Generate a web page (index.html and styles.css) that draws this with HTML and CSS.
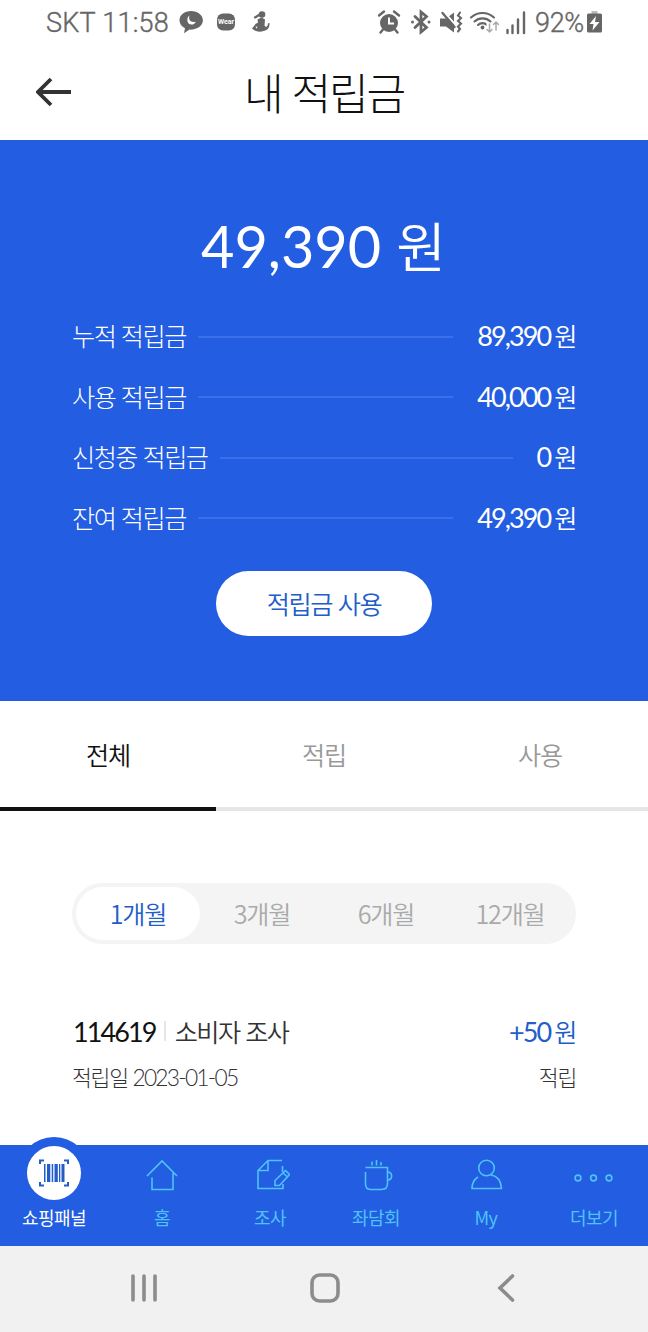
FILE: index.html
```html
<!DOCTYPE html>
<html lang="ko">
<head>
    <meta charset="UTF-8">
    <meta name="viewport" content="width=device-width, initial-scale=1.0">
    <link rel="stylesheet" href="styles.css">
    <title>내 적립금</title>
</head>
<body>
    <div id="status">
        <span class="carrier">SKT 11:58</span>
        <svg class="statusLeft" width="92" height="26" viewBox="0 0 92 26">
            <path d="M13 2C6.500 2 1.500 6 1.500 11.300c0 3.500 2.200 6.300 5.500 7.900l-1 5 5.500-3.600c7.500.4 13.400-3.800 13.400-9.300C24.900 6 19.500 2 13 2z"/>
            <path class="cut" d="M11.500 6.500c-1.500 4.300 1.300 7.500 6.300 6.200-2.200 4.600-8.500 3.300-8.500-1.500 0-2.200.8-3.700 2.200-4.700z"/>
            <rect x="39" y="4.500" width="18" height="17" rx="6"/>
            <text class="wear" x="48" y="15" text-anchor="middle">Wear</text>
            <circle cx="84" cy="5.500" r="3.300"/>
            <path d="M79.500 10.500l4-2 3.500 2-.5 6 1.500 1.500c1.500-.5 2-2.300 2-3.700l1.500-.3c.3 5-2.500 7.500-6 8-3.500 1.500-8 1-11.500-2.500l3.500-4.500 2.500-1.500z"/>
            <path class="cut" d="M77.500 17.500l2 .2-.8 2z"/>
            <path class="stroke thin" d="M77 8.500l4-2.500"/>
        </svg>
        <svg class="statusRight" width="150" height="26" viewBox="0 0 150 26">
            <!-- alarm -->
            <circle cx="12" cy="14" r="9"/>
            <path class="stroke" d="M2 6.500l5-4M22 6.500l-5-4M6 20.500l-2.500 3M18 20.500l2.500 3"/>
            <path class="cut-line" d="M12 8.500v6h5"/>
            <!-- bluetooth -->
            <path class="stroke heavy" d="M38 7.500l11.500 11-5.500 4.500V3l5.500 4.500-11.500 11"/>
            <circle cx="35.500" cy="13" r="1.500"/><circle cx="52" cy="13" r="1.500"/>
            <!-- sound off -->
            <path d="M63 9.500h6l8-6v20l-8-6h-6z"/>
            <path class="cut-line" d="M66 2l14 15.500"/>
            <path class="stroke" d="M65.500 4L77.500 18"/>
            <path class="stroke thin" d="M83 3.500l-2 3 3 2.500-3 3 3 2.500-3 3 2 2.500-2 2.500"/>
            <!-- wifi -->
            <path class="stroke thin" d="M94 8.500c6.500-6 16.500-6 23 0M97.500 12.500c4.500-4.200 11.500-4.200 16 0M101 16c2.500-2.500 6.500-2.500 9 0"/>
            <circle cx="105.500" cy="18.500" r="1.900"/>
            <path class="gap" d="M109.500 14h12v11h-12z"/>
            <path class="stroke faint" d="M112.500 15v8M110 20.500l2.500 2.500 2.500-2.500M119 21v-8M116.500 15.500l2.500-2.500 2.500 2.500"/>
            <!-- signal -->
            <path class="stroke" d="M130.500 21v3M135.500 16.500v7.500M141 10.500v13.500M147 3.500v20.500"/>
        </svg>
        <span class="battery">92%</span>
        <svg class="cell" width="15" height="22" viewBox="0 0 15 22">
            <path class="faintFill" d="M4.500 0h6v3h-6z"/>
            <rect x="0" y="2.500" width="15" height="19" rx="1.500"/>
            <path class="cut" d="M9 5L2.500 13h4l-1 6.500L12.500 11H8z"/>
        </svg>
    </div>

    <header>
        <svg class="back" width="36" height="30" viewBox="0 0 36 30"><path d="M35 15H2M15 2L2 15l13 13"/></svg>
        <h1>내 적립금</h1>
    </header>

    <div id="summary">
        <p class="total"><span class="num">49,390</span> 원</p>
        <ul>
            <li><span class="label">누적 적립금</span><i></i><span class="amount"><b>89,390</b> 원</span></li>
            <li><span class="label">사용 적립금</span><i></i><span class="amount"><b>40,000</b> 원</span></li>
            <li><span class="label">신청중 적립금</span><i></i><span class="amount"><b>0</b> 원</span></li>
            <li><span class="label">잔여 적립금</span><i></i><span class="amount"><b>49,390</b> 원</span></li>
        </ul>
        <button class="use">적립금 사용</button>
    </div>

    <div id="tabs">
        <a class="on">전체</a>
        <a>적립</a>
        <a>사용</a>
    </div>

    <div id="period">
        <a class="on">1개월</a>
        <a>3개월</a>
        <a>6개월</a>
        <a>12개월</a>
    </div>

    <div id="history">
        <div class="line">
            <p class="name"><b>114619</b><i></i>소비자 조사</p>
            <p class="plus"><b>+50</b> 원</p>
        </div>
        <div class="line small">
            <p>적립일 <span class="date">2023-01-05</span></p>
            <p>적립</p>
        </div>
    </div>

    <nav>
        <a class="panel">
            <span class="round">
                <svg width="30" height="28" viewBox="0 0 30 28">
                    <path class="corner" d="M1 5V1.500h4M25 1.500h4V5M1 23v3.500h4M25 26.500h4V23"/>
                    <path d="M5 5h1.500v18H5zM8 5h3.300v18H8zM12.700 5h1.500v18h-1.500zM15.500 5h3.300v18h-3.300zM20 5h1.300v18H20zM22.500 5h3v18h-3z"/>
                </svg>
            </span>
            <span>쇼핑패널</span>
        </a>
        <a>
            <svg width="34" height="34" viewBox="0 0 34 34"><path d="M2 18L17 3l15 15M7 19.500V31.500h21V15"/></svg>
            <span>홈</span>
        </a>
        <a>
            <svg width="40" height="34" viewBox="0 0 40 34"><path d="M32 2.500H18L8 12.500v18h25V26M18 2.500v10H8M32.500 8v6M25 27.500V22.500L35.500 12.500l4 4L29.500 27.500zM33 15l4 3.500"/></svg>
            <span>조사</span>
        </a>
        <a class="talk">
            <svg width="34" height="34" viewBox="0 0 34 34"><path d="M6.500 9.500h22v16c0 4-2 6-6 6h-11c-3.500 0-5-2-5-6V14M28.500 14c5.500-.5 5.500 8.500 0 8M13 3.500v4M17.500 2v5.500M22 4v3.500"/></svg>
            <span>좌담회</span>
        </a>
        <a>
            <svg width="34" height="34" viewBox="0 0 34 34"><circle cx="17.500" cy="10" r="7.800"/><path d="M9 19c-4 2.500-6 6-6 11.500h29.500C32 23 28 18 22 17"/></svg>
            <span>My</span>
        </a>
        <a>
            <svg width="40" height="34" viewBox="0 0 40 34"><circle cx="4" cy="20" r="2.900"/><circle cx="19.500" cy="20" r="2.900"/><circle cx="35" cy="20" r="2.900"/></svg>
            <span>더보기</span>
        </a>
    </nav>

    <div id="system">
        <svg width="30" height="30" viewBox="0 0 30 30"><path d="M4 3v24M15 3v24M26 3v24"/></svg>
        <svg width="30" height="30" viewBox="0 0 30 30"><rect x="2" y="2" width="26" height="26" rx="7.500"/></svg>
        <svg width="30" height="30" viewBox="0 0 30 30"><path d="M21.500 3l-12.500 12 12.500 12"/></svg>
    </div>
</body>
</html>
```

FILE: styles.css
```css
*{ box-sizing: border-box; margin: 0; padding: 0; }
body{ width: 648px; height: 1332px; overflow: hidden; background-color: #fff; font-family: "Noto Sans CJK KR", sans-serif; font-weight: 350; display: flex; flex-direction: column; }
svg{ flex: none; display: block; }
i{ display: block; }

#status{ height: 46px; display: flex; align-items: center; padding: 0 46px 2px 46px; font: 27px/1 Roboto, sans-serif; color: #666; fill: #666; }
.carrier{ width: 124px; padding-top: 2px; font-weight: 300; white-space: nowrap; letter-spacing: 0.25px; -webkit-text-stroke: 0.4px #666; }
.statusLeft{ margin-left: 8px; }
.statusRight{ margin-left: auto; }
.battery{ font-weight: 300; margin-left: 8px; padding-top: 2px; width: 51px; -webkit-text-stroke: 0.4px #666; letter-spacing: -0.3px; }
.cell{ margin-left: 1px; }
.cut{ fill: #fff; }
.gap{ fill: #fff; }
.cut-line{ fill: none; stroke: #fff; stroke-width: 2; }
.wear{ font: bold 7px Roboto, sans-serif; fill: #fff; }
.stroke{ fill: none; stroke: #666; stroke-width: 2.4; stroke-linecap: round; }
.thin{ stroke-width: 2.1; }
.heavy{ stroke-width: 2.8; }
.faint{ stroke: #aaa; stroke-width: 1.5; }
.faintFill{ fill: #bbb; }

header{ height: 94px; position: relative; display: flex; justify-content: center; align-items: center; padding-bottom: 5px; }
.back{ position: absolute; left: 36px; top: 31px; fill: none; stroke: #333; stroke-width: 3.8; }
h1{ font-size: 43.2px; line-height: 60px; font-weight: 300; letter-spacing: -0.05em; color: #111; }

#summary{ height: 561px; background-color: #225de2; color: #fff; padding: 65px 72px 0; display: flex; flex-direction: column; align-items: center; }
.total{ font-size: 54px; line-height: 80px; white-space: nowrap; margin-left: -1px; }
.total .num{ font-family: Lato, sans-serif; font-weight: 400; font-size: 57.6px; }
ul{ list-style: none; width: 504px; margin-top: 19px; }
li{ display: flex; align-items: center; height: 60.5px; font-size: 25.2px; letter-spacing: -0.06em; }
li i{ flex: 1; height: 2px; margin: 3px 24px 0 12px; background-color: #3a70e8; }
.label{ font-weight: 300; }
.amount{ word-spacing: -1.5px; }
.amount b{ font: 400 27px/1 Lato, sans-serif; letter-spacing: -0.07em; }
.use{ width: 216px; height: 65px; margin-top: 24px; padding-bottom: 2px; border: 0; border-radius: 33px; background-color: #fff; color: #225dc9; font: 350 25.2px "Noto Sans CJK KR", sans-serif; letter-spacing: -0.055em; }

#tabs{ display: flex; height: 110px; }
#tabs a{ flex: 1; text-align: center; font-size: 25.2px; line-height: 106px; letter-spacing: -0.05em; color: #999; border-bottom: 4px solid #e6e6e6; }
#tabs a.on{ color: #111; border-color: #111; }

#period{ display: flex; width: 504px; height: 61px; margin: 72px auto 0; padding: 4px; border-radius: 31px; background-color: #f4f4f4; }
#period a{ flex: 1; text-align: center; font-size: 25.2px; line-height: 53px; letter-spacing: -0.05em; color: #aaa; border-radius: 27px; }
#period a.on{ background-color: #fff; color: #225dc9; }

#history{ width: 504px; margin: 65px auto 0; }
.line{ display: flex; justify-content: space-between; font-size: 25.2px; line-height: 44px; letter-spacing: -0.06em; color: #333; }
.line b{ font: 400 27px/1 Lato, sans-serif; letter-spacing: -0.07em; }
.name{ display: flex; align-items: center; }
.name b{ color: #111; margin-left: 1px; }
.name i{ width: 2px; height: 20px; margin: 0 9px 0 8px; background-color: #e6e6e6; }
.plus{ color: #225dc9; word-spacing: -1.5px; }
.plus b{ letter-spacing: -0.07em; }
.small{ font-size: 21.6px; line-height: 48px; font-weight: 300; }
.date{ font-family: Lato, sans-serif; font-size: 22.8px; letter-spacing: -0.078em; }

nav{ display: flex; height: 101px; margin-top: auto; background-color: #225de2; }
nav a{ flex: 1; display: flex; flex-direction: column; align-items: center; padding-top: 13px; font-size: 18px; line-height: 26px; letter-spacing: -0.03em; color: #4fc3f7; fill: none; stroke: #4fc3f7; stroke-width: 1.6; }
nav a > span:last-child{ margin-top: 12px; stroke: none; font-weight: 400; }
nav .panel{ color: #fff; fill: #225dc9; stroke: none; padding-top: 0; }
nav .talk > *{ margin-right: 4px; }
.round{ width: 72px; height: 72px; margin-top: -8px; border: 9px solid #225de2; border-radius: 50%; background-color: #fff; display: flex; justify-content: center; align-items: center; }
nav .panel > span:last-child{ margin-top: -5px; }
.corner{ fill: none; stroke: #225dc9; stroke-width: 2; }

#system{ height: 86px; flex: none; background-color: #f1f1f1; display: flex; justify-content: space-between; align-items: center; padding: 0 127px 2px 129px; fill: none; stroke: #8c8c8c; stroke-width: 3.6; stroke-linecap: round; }
```
